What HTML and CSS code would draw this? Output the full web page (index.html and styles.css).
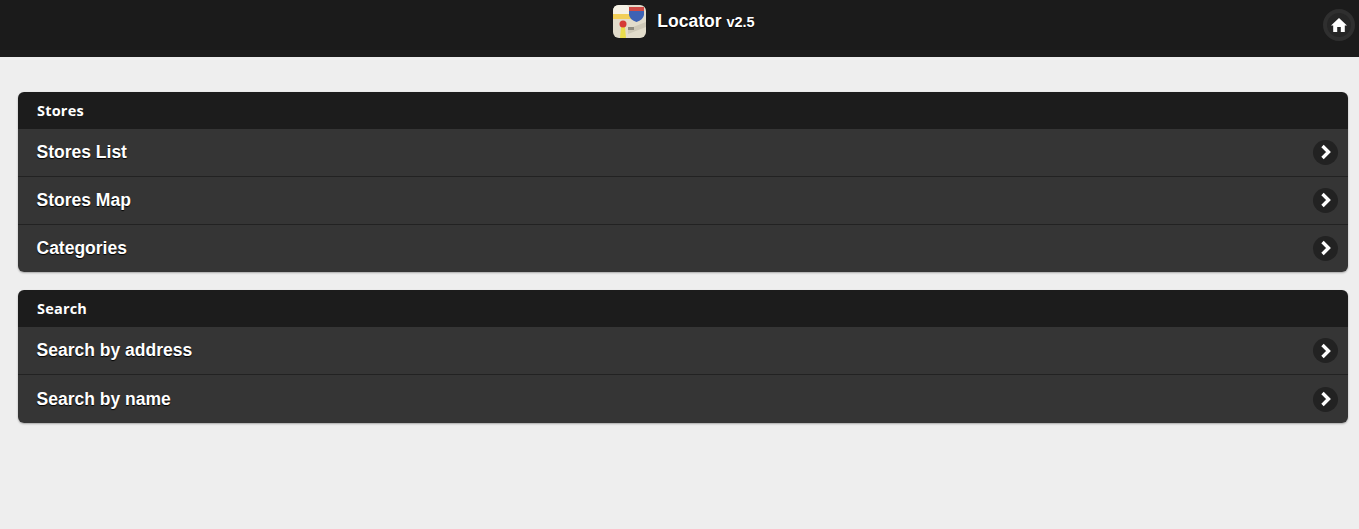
FILE: index.html
```html
<!DOCTYPE html>
<html>
<head>
  <link rel="stylesheet" href="styles.css">
  <title>Locator</title>
</head>
<body>
  <header class="top-bar">
    <div class="brand">
      <svg class="app-icon" width="33" height="33" viewBox="0 0 33 33">
        <rect width="33" height="33" rx="6" fill="#e2dccb"/>
        <path d="M0 6q0-6 6-6h8l10 12H0z" fill="#f6f2e6"/>
        <path d="M0 9h20l6 5H0z" fill="#f2cf58"/>
        <path d="M15 24l18-7v5l-18 7z" fill="#cfc9b8"/>
        <path d="M16 3h15v7q-1 5-7.500 7-6.500-2-7.500-7z" fill="#3d62b4"/>
        <path d="M16 2h15v4H16z" fill="#cf4a45"/>
        <path d="M8 22h4l1 11H7z" fill="#e9dd4c"/>
        <circle cx="10" cy="19" r="3.500" fill="#d63a35"/>
        <rect x="15" y="22" width="6" height="3" fill="#8f8b7f"/>
      </svg>
      <span class="brand-name">Locator <small>v2.5</small></span>
    </div>
    <a class="home-btn" href="#">
      <svg width="16" height="16" viewBox="0 0 16 16">
        <path d="M8 1l8 7.500h-2.200V15H9.800V10H6.200v5H2.200V8.500H0z" fill="#fff"/>
      </svg>
    </a>
  </header>

  <main class="content">
    <section class="group">
      <h2 class="group-title">Stores</h2>
      <a class="row" href="#">Stores List<span class="arrow"><svg width="14" height="16" viewBox="0 0 14 16"><path d="M3.500 2l6 6-6 6" fill="none" stroke="#fff" stroke-width="3.400"/></svg></span></a>
      <a class="row" href="#">Stores Map<span class="arrow"><svg width="14" height="16" viewBox="0 0 14 16"><path d="M3.500 2l6 6-6 6" fill="none" stroke="#fff" stroke-width="3.400"/></svg></span></a>
      <a class="row" href="#">Categories<span class="arrow"><svg width="14" height="16" viewBox="0 0 14 16"><path d="M3.500 2l6 6-6 6" fill="none" stroke="#fff" stroke-width="3.400"/></svg></span></a>
    </section>

    <section class="group">
      <h2 class="group-title">Search</h2>
      <a class="row" href="#">Search by address<span class="arrow"><svg width="14" height="16" viewBox="0 0 14 16"><path d="M3.500 2l6 6-6 6" fill="none" stroke="#fff" stroke-width="3.400"/></svg></span></a>
      <a class="row" href="#">Search by name<span class="arrow"><svg width="14" height="16" viewBox="0 0 14 16"><path d="M3.500 2l6 6-6 6" fill="none" stroke="#fff" stroke-width="3.400"/></svg></span></a>
    </section>
  </main>
</body>
</html>
```

FILE: styles.css
```css
html, body {
  margin: 0;
  padding: 0;
}

body {
  background-color: #eeeeee;
  font-family: "Liberation Sans", Arial, sans-serif;
  color: #fff;
}

/* Barra superior */
.top-bar {
  height: 57px;
  box-sizing: border-box;
  background-color: #1b1b1b;
  display: flex;
  justify-content: center;
  align-items: flex-start;
  padding-top: 5px;
  padding-left: 9px;
}

.brand {
  display: flex;
  align-items: flex-start;
  gap: 11px;
}

.app-icon {
  display: block;
}

.brand-name {
  font-size: 17.5px;
  font-weight: bold;
  line-height: 20px;
  margin-top: 6px;
  text-shadow: 0 1px 1px #000;
}

.brand-name small {
  font-size: 14.5px;
}

.home-btn {
  position: absolute;
  top: 9px;
  right: 4px;
  width: 24px;
  height: 24px;
  border-radius: 50%;
  background-color: #262626;
  border: 4px solid #2f2f2f;
  display: flex;
  align-items: center;
  justify-content: center;
}

/* Listas */
.content {
  padding: 35px 11px 0 18px;
}

.group {
  border-radius: 6px;
  overflow: hidden;
  margin-bottom: 18px;
  box-shadow: 0 1px 2px rgba(0, 0, 0, 0.3);
}

.group-title {
  margin: 0;
  height: 37px;
  box-sizing: border-box;
  padding-left: 19px;
  background-color: #1c1c1c;
  font-family: "Open Sans", sans-serif;
  font-size: 14.5px;
  font-weight: 700;
  letter-spacing: 0.2px;
  line-height: 37px;
}

.row {
  display: flex;
  align-items: center;
  justify-content: space-between;
  height: 47.8px;
  box-sizing: border-box;
  padding: 0 10px 0 18.5px;
  background-color: #353535;
  border-bottom: 1px solid #222;
  color: #fff;
  font-size: 17.5px;
  font-weight: bold;
  text-decoration: none;
  text-shadow: 0 1px 1px #000;
}

.row:last-child {
  border-bottom: none;
}

.arrow {
  width: 25px;
  height: 25px;
  border-radius: 50%;
  background-color: #222;
  display: flex;
  align-items: center;
  justify-content: center;
}
```
